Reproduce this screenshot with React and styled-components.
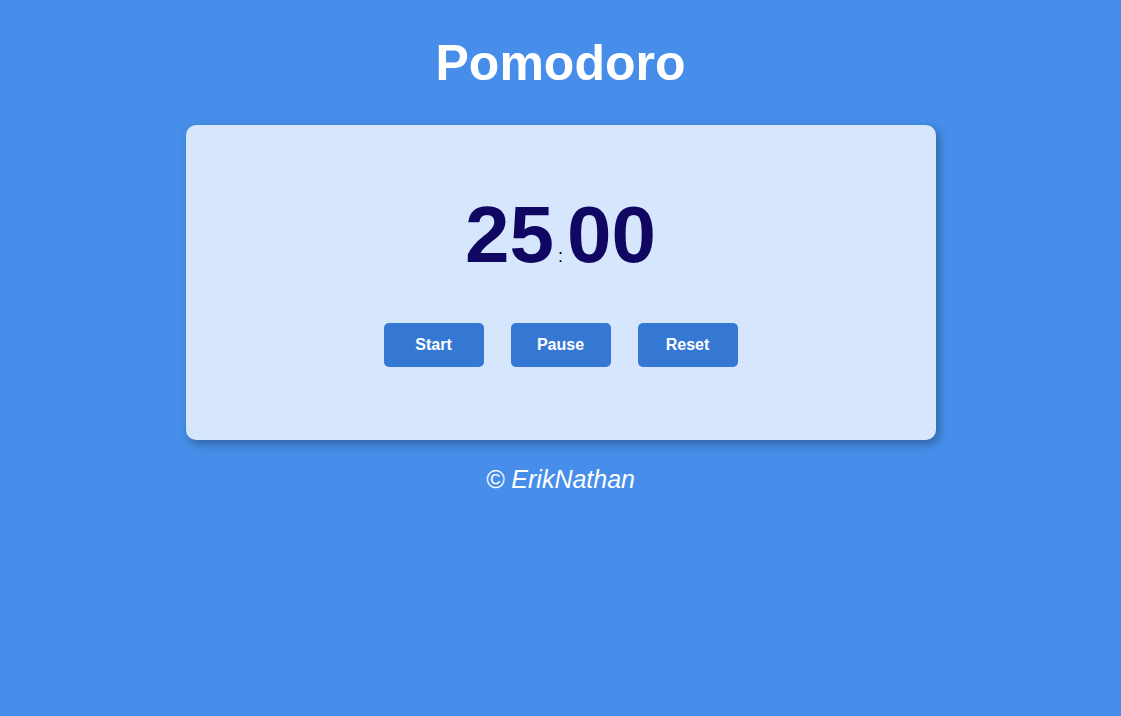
import styled, { createGlobalStyle } from 'styled-components'

const Global = createGlobalStyle`
    html, body {
        margin: 0;
        padding: 0;
        background: #468ee9;
        font-family: "Liberation Sans", Arial, sans-serif;
    }
`

const App = () => {
    return (
        <Page>
            <Global />
            <Title>Pomodoro</Title>

            <Card>
                <Timer>
                    <span>25</span>
                    <Colon>:</Colon>
                    <span>00</span>
                </Timer>

                <Controls>
                    {['Start', 'Pause', 'Reset'].map((label) => <Button key={label}>{label}</Button>)}
                </Controls>
            </Card>

            <Footer>© ErikNathan</Footer>
        </Page>
    )
}


const Page = styled.div`
    display: flex;
    flex-direction: column;
    align-items: center;
    min-height: 100vh;
    padding-top: 33px;
    box-sizing: border-box;
`

const Title = styled.h1`
    margin: 0 0 32px;
    font-size: 50px;
    line-height: 60px;
    font-weight: 700;
    color: #ffffff;
`

const Card = styled.div`
    width: 750px;
    height: 315px;
    box-sizing: border-box;
    padding-top: 64px;
    display: flex;
    flex-direction: column;
    align-items: center;
    background: #d6e6fc;
    border-radius: 10px;
    box-shadow: 3px 4px 10px rgba(0, 0, 0, 0.3);
`

const Timer = styled.div`
    display: flex;
    align-items: baseline;
    font-size: 80px;
    line-height: 92px;
    font-weight: 700;
    color: #100762;
`

const Colon = styled.span`
    font-size: 18px;
    line-height: 20px;
    font-weight: 400;
    color: #000;
    margin: 0 4px;
`

const Controls = styled.div`
    display: flex;
    gap: 27px;
    margin-top: 42px;
`

const Button = styled.button`
    width: 100px;
    height: 44px;
    border: none;
    border-radius: 5px;
    background: #3478d4;
    color: #ffffff;
    font-family: "Liberation Sans", Arial, sans-serif;
    font-size: 16px;
    font-weight: 700;
    cursor: pointer;
`

const Footer = styled.p`
    margin: 25px 0 0;
    font-size: 25px;
    line-height: 28px;
    font-style: italic;
    color: #ffffff;
`

export default App
